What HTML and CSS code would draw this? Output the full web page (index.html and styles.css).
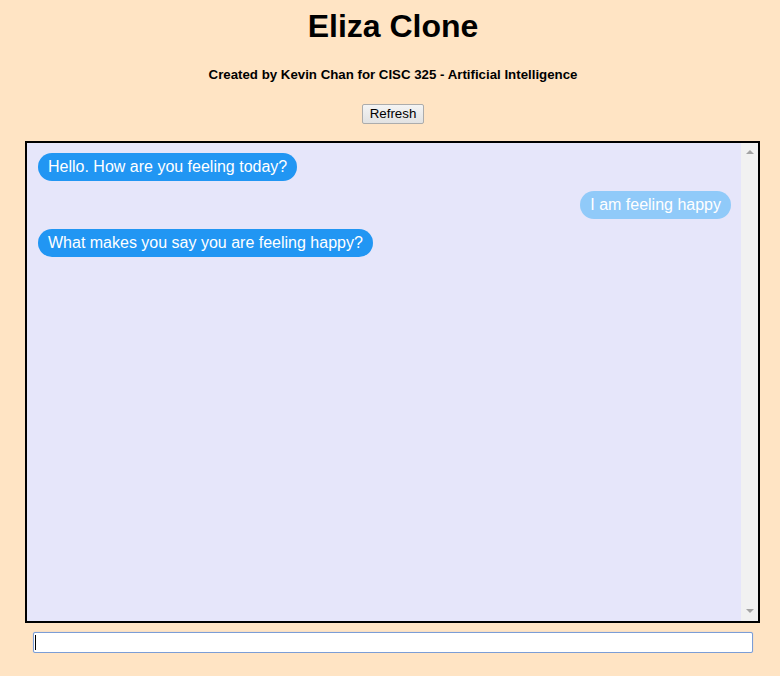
FILE: index.html
```html
<!DOCTYPE html>
<html>
<head>
<meta charset="utf-8">
<title>Eliza Clone</title>
<link rel="stylesheet" href="styles.css">
</head>
<body>
<div class="page">
  <h1 class="title">Eliza Clone</h1>
  <h5 class="subtitle">Created by Kevin Chan for CISC 325 - Artificial Intelligence</h5>
  <div class="actions"><button class="refresh" type="button">Refresh</button></div>
  <div class="chat">
    <div class="messages">
      <div class="msg bot"><span class="bubble">Hello. How are you feeling today?</span></div>
      <div class="msg user"><span class="bubble">I am feeling happy</span></div>
      <div class="msg bot"><span class="bubble">What makes you say you are feeling happy?</span></div>
    </div>
    <div class="scrollbar">
      <span class="arrow up"></span>
      <span class="arrow down"></span>
    </div>
  </div>
  <div class="entry-wrap">
    <input class="entry" type="text" autofocus>
    <span class="caret"></span>
  </div>
</div>
</body>
</html>
```
FILE: styles.css
```css
html, body {
  margin: 0;
  padding: 0;
  background: #ffe4c4;
}
body {
  font-family: "Liberation Sans", Arial, sans-serif;
  color: #000;
}
.page {
  padding: 8px 8px 0 14px;
  display: flex;
  flex-direction: column;
}
.title {
  margin: 0;
  font-size: 32px;
  line-height: 37px;
  font-weight: bold;
  text-align: center;
}
.subtitle {
  margin: 22px 0 0;
  font-size: 13.28px;
  line-height: 15px;
  font-weight: bold;
  text-align: center;
}
.actions {
  margin-top: 22px;
  display: flex;
  justify-content: center;
}
.refresh {
  height: 20px;
  box-sizing: border-box;
  padding: 0 7px;
  font-family: "Liberation Sans", Arial, sans-serif;
  font-size: 13.33px;
  line-height: 16px;
  color: #000;
  background: linear-gradient(#f4f4f4, #e2e2e2);
  border: 1px solid #acacac;
  border-radius: 2px;
}
.chat {
  margin: 17px 0 0 11px;
  width: 735px;
  height: 482px;
  box-sizing: border-box;
  border: 2px solid #000;
  background: #e6e6fa;
  display: flex;
}
.messages {
  flex: 1;
  padding: 10px 10px 10px 11px;
  display: flex;
  flex-direction: column;
  gap: 10px;
}
.msg {
  display: flex;
}
.msg.user {
  justify-content: flex-end;
}
.bubble {
  display: inline-block;
  padding: 5px 10px;
  height: 28px;
  box-sizing: border-box;
  border-radius: 14px;
  font-size: 16px;
  line-height: 18px;
  color: #fff;
  background: #2196f3;
}
.msg.user .bubble {
  background: #90caf9;
}
.scrollbar {
  width: 17px;
  background: #f1f1f1;
  display: flex;
  flex-direction: column;
  justify-content: space-between;
  align-items: center;
  padding: 7px 0 8px;
  box-sizing: border-box;
}
.arrow {
  width: 0;
  height: 0;
  border-left: 4px solid transparent;
  border-right: 4px solid transparent;
}
.arrow.up {
  border-bottom: 4px solid #a3a3a3;
}
.arrow.down {
  border-top: 4px solid #a3a3a3;
}
.entry-wrap {
  position: relative;
  margin: 9px 0 0 19px;
  width: 720px;
  height: 21px;
}
.entry {
  display: block;
  margin: 0;
  width: 720px;
  height: 21px;
  box-sizing: border-box;
  padding: 1px 2px;
  border: 1px solid #7b9dd6;
  border-radius: 2px;
  box-shadow: 0 0 1px 0 #9db7e4;
  background: #fff;
  outline: none;
  font-family: "Liberation Sans", Arial, sans-serif;
  font-size: 13.33px;
  caret-color: transparent;
}
.caret {
  position: absolute;
  left: 2px;
  top: 3px;
  width: 1px;
  height: 15px;
  background: #000;
}
```
